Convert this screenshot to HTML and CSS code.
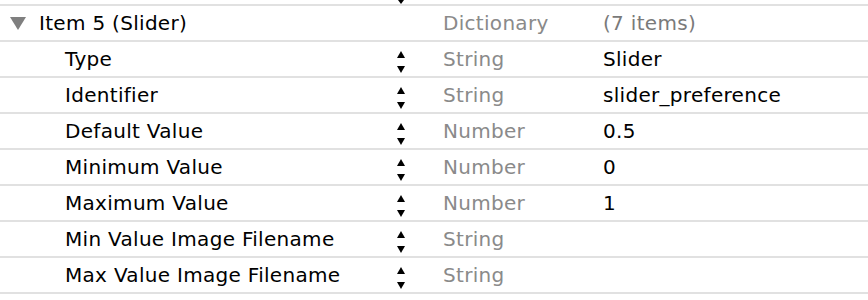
FILE: index.html
```html
<!DOCTYPE html>
<html lang="en">
<head>
  <meta charset="UTF-8" />
  <title>Property List</title>
  <link rel="stylesheet" href="styles.css">
</head>
<body>
  <div class="plist">
    <div class="row stub">
      <div class="key"></div>
      <div class="stepper">
        <svg width="10" height="4" viewBox="0 0 10 4"><polygon points="2,0 8,0 5,4" /></svg>
      </div>
      <div></div>
      <div></div>
    </div>

    <div class="row">
      <div class="key parent"><span class="disclosure"></span>Item 5 (Slider)</div>
      <div class="stepper"></div>
      <div class="type">Dictionary</div>
      <div class="value muted">(7 items)</div>
    </div>

    <div class="row">
      <div class="key child">Type</div>
      <div class="stepper"><svg width="10" height="22" viewBox="0 0 10 22"><polygon points="1,7 5,0 9,7" /><polygon points="1,15 9,15 5,22" /></svg></div>
      <div class="type">String</div>
      <div class="value">Slider</div>
    </div>

    <div class="row">
      <div class="key child">Identifier</div>
      <div class="stepper"><svg width="10" height="22" viewBox="0 0 10 22"><polygon points="1,7 5,0 9,7" /><polygon points="1,15 9,15 5,22" /></svg></div>
      <div class="type">String</div>
      <div class="value">slider_preference</div>
    </div>

    <div class="row">
      <div class="key child">Default Value</div>
      <div class="stepper"><svg width="10" height="22" viewBox="0 0 10 22"><polygon points="1,7 5,0 9,7" /><polygon points="1,15 9,15 5,22" /></svg></div>
      <div class="type">Number</div>
      <div class="value">0.5</div>
    </div>

    <div class="row">
      <div class="key child">Minimum Value</div>
      <div class="stepper"><svg width="10" height="22" viewBox="0 0 10 22"><polygon points="1,7 5,0 9,7" /><polygon points="1,15 9,15 5,22" /></svg></div>
      <div class="type">Number</div>
      <div class="value">0</div>
    </div>

    <div class="row">
      <div class="key child">Maximum Value</div>
      <div class="stepper"><svg width="10" height="22" viewBox="0 0 10 22"><polygon points="1,7 5,0 9,7" /><polygon points="1,15 9,15 5,22" /></svg></div>
      <div class="type">Number</div>
      <div class="value">1</div>
    </div>

    <div class="row">
      <div class="key child">Min Value Image Filename</div>
      <div class="stepper"><svg width="10" height="22" viewBox="0 0 10 22"><polygon points="1,7 5,0 9,7" /><polygon points="1,15 9,15 5,22" /></svg></div>
      <div class="type">String</div>
      <div class="value"></div>
    </div>

    <div class="row">
      <div class="key child">Max Value Image Filename</div>
      <div class="stepper"><svg width="10" height="22" viewBox="0 0 10 22"><polygon points="1,7 5,0 9,7" /><polygon points="1,15 9,15 5,22" /></svg></div>
      <div class="type">String</div>
      <div class="value"></div>
    </div>
  </div>
</body>
</html>
```

FILE: styles.css
```css
body {
  margin: 0;
  background-color: #ffffff;
  font-family: "DejaVu Sans", "Liberation Sans", sans-serif;
  font-size: 20px;
  letter-spacing: 0.3px;
  color: #000000;
}

.plist {
  width: 868px;
}

.row {
  display: grid;
  grid-template-columns: 396px 47px 160px 1fr;
  height: 34px;
  line-height: 34px;
  border-bottom: 2px solid #e1e1e1;
  white-space: nowrap;
}

.row.stub {
  height: 4px;
  overflow: hidden;
}

.row.stub .stepper {
  padding-top: 0;
}

.key {
  display: flex;
  align-items: center;
}

.key.parent {
  padding-left: 10px;
}

.key.child {
  padding-left: 65px;
}

.disclosure {
  width: 0;
  height: 0;
  border-left: 8px solid transparent;
  border-right: 8px solid transparent;
  border-top: 13px solid #7f7f7f;
  margin-right: 13px;
  margin-top: 1px;
}

.stepper {
  display: flex;
  align-items: flex-start;
  padding-top: 9px;
}

.stepper svg {
  display: block;
  fill: #000000;
}

.type {
  color: #8a8a8a;
}

.value.muted {
  color: #7a7a7a;
}
```
